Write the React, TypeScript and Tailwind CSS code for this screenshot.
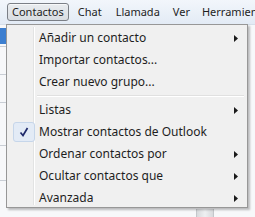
import React from "react";

const Arrow = () => (
  <svg width="4" height="7" viewBox="0 0 4 7" className="block">
    <path d="M0 0 L4 3.5 L0 7 Z" fill="#1a1a1a" />
  </svg>
);

type Item = { label: string; sub?: boolean; checked?: boolean; sep?: boolean };

const items: Item[] = [
  { label: "Añadir un contacto", sub: true },
  { label: "Importar contactos..." },
  { label: "Crear nuevo grupo..." },
  { label: "", sep: true },
  { label: "Listas", sub: true },
  { label: "Mostrar contactos de Outlook", checked: true },
  { label: "Ordenar contactos por", sub: true },
  { label: "Ocultar contactos que", sub: true },
  { label: "Avanzada", sub: true },
];

export default function App() {
  return (
    <div
      className="relative w-[255px] h-[217px] overflow-hidden bg-[#f7f8fa] text-[12px] text-[#1e1e1e]"
      style={{ fontFamily: '"Segoe UI", "Noto Sans", "Open Sans", sans-serif' }}
    >
      {/* menubar */}
      <div className="h-[25px] bg-gradient-to-b from-[#f2f6fb] to-[#e3ebf5] border-b border-[#d6dfea] flex items-center pl-[7px] text-[11px] whitespace-nowrap">
        <div className="h-[18px] px-[4px] flex items-center rounded-[3px] border border-[#7b7f86] bg-gradient-to-b from-[#e9ecef] to-[#d9dde2] shadow-[inset_0_1px_0_#f7f8f9]">
          Contactos
        </div>
        <div className="ml-[9px]">Chat</div>
        <div className="ml-[14px]">Llamada</div>
        <div className="ml-[13px]">Ver</div>
        <div className="ml-[12px]">Herramientas</div>
      </div>

      {/* underlying content bits at left edge */}
      <div className="absolute left-0 top-[28px] w-[6px] h-[16px] bg-[#3d7fd0]" />
      <div className="absolute left-0 top-[46px] w-[6px] h-[1px] bg-[#c9ced5]" />
      <div className="absolute left-0 top-[74px] w-[6px] h-[1px] bg-[#c9ced5]" />
      <div className="absolute left-0 top-[102px] w-[6px] h-[1px] bg-[#c9ced5]" />
      <div className="absolute left-0 top-[145px] w-[6px] h-[1px] bg-[#c9ced5]" />
      <div className="absolute left-0 top-[180px] w-[6px] h-[1px] bg-[#c9ced5]" />
      <div className="absolute left-[196px] top-[209px] w-[18px] h-[8px] bg-gradient-to-r from-[#d8dadd] via-[#eef0f2] to-[#d8dadd] border-x border-[#c4c7cb]" />

      {/* dropdown menu */}
      <div className="absolute left-[6px] top-[24px] w-[242px] h-[184px] bg-[#f0f0f0] border border-[#979797] shadow-[2px_2px_2px_rgba(0,0,0,0.25)] p-[2px]">
        <div className="absolute left-[26px] top-[2px] bottom-[2px] w-[1px] bg-[#e2e3e3]" />
        <div className="absolute left-[27px] top-[2px] bottom-[2px] w-[1px] bg-[#ffffff]" />
        <div className="relative flex flex-col">
          {items.map((it, i) =>
            it.sep ? (
              <div key={i} className="h-[6px] flex items-center pl-[28px] pr-[1px]">
                <div className="w-full">
                  <div className="h-[1px] bg-[#e0e0e0]" />
                  <div className="h-[1px] bg-[#ffffff]" />
                </div>
              </div>
            ) : (
              <div key={i} className="h-[22px] flex items-center">
                <div className="w-[29px] flex items-center justify-center shrink-0">
                  {it.checked && (
                    <div className="w-[22px] h-[20px] rounded-[3px] border border-[#c6d6ea] bg-[#e3ebf6] flex items-center justify-center">
                      <svg width="10" height="10" viewBox="0 0 10 10">
                        <path d="M1.5 5.5 L4 8.5 L8.5 1" fill="none" stroke="#1f2a6b" strokeWidth="1.7" />
                      </svg>
                    </div>
                  )}
                </div>
                <div className="pl-[1px] flex-1 whitespace-nowrap">{it.label}</div>
                <div className="w-[11px] shrink-0 flex items-center">{it.sub && <Arrow />}</div>
              </div>
            )
          )}
        </div>
      </div>
    </div>
  );
}
